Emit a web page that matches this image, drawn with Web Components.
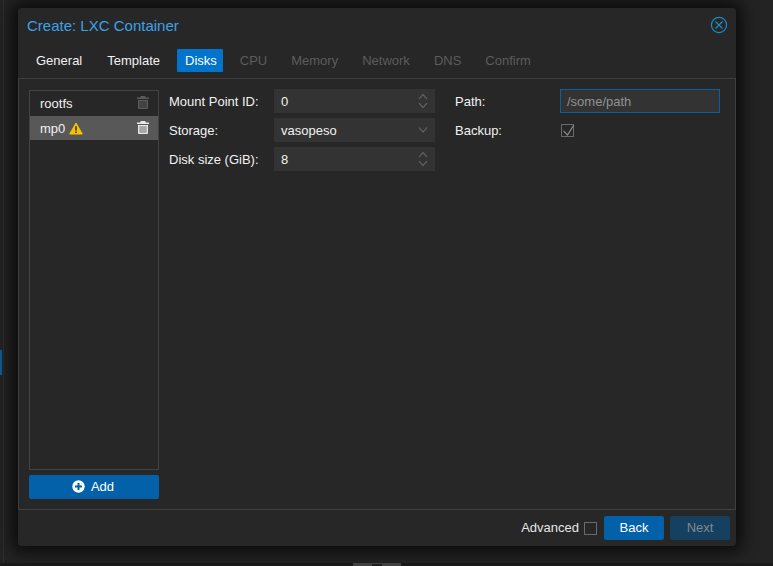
<!DOCTYPE html>
<html>
<head>
<meta charset="utf-8">
<title>Create: LXC Container</title>
<style>
  html, body { margin: 0; height: 100%; }
  body {
    width: 773px;
    height: 566px;
    overflow: hidden;
    background: #1f1f1f;
    font-family: "Liberation Sans", Arial, sans-serif;
  }
</style>
</head>
<body>
<lxc-backdrop>
  <lxc-window heading="Create: LXC Container">
    <lxc-tabs slot="tabs"></lxc-tabs>
    <disk-list slot="side"></disk-list>
    <disk-form slot="main"></disk-form>
    <wizard-footer slot="footer"></wizard-footer>
  </lxc-window>
</lxc-backdrop>
<script>
"use strict";
function makeTemplate(html) {
    const template = document.createElement("template");
    template.innerHTML = html;
    return template;
}
class BaseElement extends HTMLElement {
    constructor(template) {
        super();
        this.attachShadow({ mode: "open" });
        this.shadowRoot.appendChild(template.content.cloneNode(true));
    }
}

const backdropTemplate = makeTemplate(`
  <style>
    :host { display: block; position: relative; width: 773px; height: 566px; box-sizing: border-box;
      padding: 8px 37px 20px 18px; background: #232323; overflow: hidden; }
    .rail { position: absolute; left: 3px; top: 0; bottom: 0; width: 1px; background: #2f2f2f; }
    .marker { position: absolute; left: 0; top: 350px; width: 2px; height: 25px; background: #0f5f94; }
    .strip { position: absolute; left: 0; right: 0; bottom: 0; height: 3px; background: #1a1a1a; }
    .peek { position: absolute; left: 353px; top: 563px; width: 48px; height: 3px; background: #444; }
    .peek::after { content: ""; position: absolute; left: 19px; top: 1px; width: 10px; height: 2px; background: #222; }
    ::slotted(*) { position: relative; z-index: 1; }
  </style>
  <div class="rail"></div><div class="marker"></div><div class="strip"></div><div class="peek"></div>
  <slot></slot>`);
class LxcBackdrop extends BaseElement {
    constructor() { super(backdropTemplate); }
}
customElements.define("lxc-backdrop", LxcBackdrop);

const windowTemplate = makeTemplate(`
  <style>
    :host { display: flex; flex-direction: column; width: 718px; height: 538px; box-sizing: border-box;
      background: #272727; border-radius: 4px; color: #f2f2f2; font-size: 13px;
      box-shadow: 0 0 16px 6px rgba(0,0,0,.7); }
    header { display: flex; align-items: center; justify-content: space-between; height: 36px; box-sizing: border-box;
      padding: 0 8px 2px 9px; }
    h1 { margin: 0; font-size: 15px; font-weight: 400; color: #3ea2e8; }
    svg { display: block; }
    .tabs { height: 34px; }
    .body { flex: 1; display: flex; border: 1px solid #3f3f3f; border-bottom-color: #414141; min-height: 0; }
    .side { width: 130px; padding: 11px 0 10px 10px; display: flex; flex-direction: column; }
    .main { flex: 1; min-width: 0; }
    footer { height: 36px; }
  </style>
  <header>
    <h1></h1>
    <svg width="18" height="18" viewBox="0 0 18 18" fill="none" stroke="#1c8cc4" stroke-width="1.2">
      <circle cx="9" cy="9" r="7.6"/><path d="M5.500 5.500 12.500 12.500M12.500 5.500 5.500 12.500"/>
    </svg>
  </header>
  <div class="tabs"><slot name="tabs"></slot></div>
  <div class="body">
    <div class="side"><slot name="side"></slot></div>
    <div class="main"><slot name="main"></slot></div>
  </div>
  <footer><slot name="footer"></slot></footer>`);
class LxcWindow extends BaseElement {
    constructor() {
        super(windowTemplate);
        this.shadowRoot.querySelector("h1").textContent = this.getAttribute("heading");
    }
}
customElements.define("lxc-window", LxcWindow);

const tabsTemplate = makeTemplate(`
  <style>
    :host { display: flex; padding: 5px 0 0 7px; gap: 2px; font-size: 13px; }
    span { height: 23px; line-height: 23px; padding: 0 11px; box-sizing: border-box; border-radius: 1px; color: #f2f2f2; }
    span.first { padding-right: 12px; }
    span.on { background: #0274cc; padding: 0 6px 0 8px; margin: 0 0 0 4px; color: #fff; }
    span.off { color: #5c5c5c; }
    span.after { margin-left: 4px; }
  </style>
  <span class="first">General</span><span>Template</span><span class="on">Disks</span>
  <span class="off after">CPU</span><span class="off">Memory</span><span class="off">Network</span><span class="off">DNS</span><span class="off">Confirm</span>`);
class LxcTabs extends BaseElement {
    constructor() { super(tabsTemplate); }
}
customElements.define("lxc-tabs", LxcTabs);

const TRASH = `<svg width="12" height="13" viewBox="0 0 12 13"><path fill="currentColor" fill-rule="evenodd" d="M4 0h4l1 1.500h3v1.500H0V1.500h3zM1 4h10v8a1 1 0 0 1-1 1H2a1 1 0 0 1-1-1zM2.500 5.200v6.600h7V5.200z"/><rect x="2.500" y="5.200" width="7" height="6.600" fill="currentColor" opacity=".55"/></svg>`;
const listTemplate = makeTemplate(`
  <style>
    :host { display: flex; flex-direction: column; height: 100%; }
    .list { flex: 1; border: 1px solid #434343; font-size: 13px; box-sizing: border-box; }
    .row { display: flex; align-items: center; height: 25px; padding: 0 9px 0 10px; color: #f2f2f2; gap: 3.6px; }
    .row.sel { background: #585858; height: 24px; padding-top: 1px; box-sizing: border-box; }
    .trash { margin-left: auto; color: #5a5a5a; margin-top: -2px; }
    .sel .trash { color: #e8e8e8; }
    .row svg { display: block; }
    button { all: unset; box-sizing: border-box; margin-top: 5px; height: 24px; background: #0261a8; border-radius: 2px;
      padding: 0 2px 1px 0; display: flex; align-items: center; justify-content: center; gap: 6px; color: #fff;
      font: 13px "Liberation Sans", Arial, sans-serif; }
  </style>
  <div class="list">
    <div class="row">rootfs<span class="trash">${TRASH}</span></div>
    <div class="row sel">mp0
      <svg width="14" height="13" viewBox="0 0 14 13"><path fill="#f5c400" stroke="#f5c400" stroke-width="1" stroke-linejoin="round" d="M7 1 13.300 12H0.700z"/><path fill="#3a3000" d="M6.200 4.200h1.600v4.300H6.200zM6.200 9.500h1.600v1.500H6.200z"/></svg>
      <span class="trash">${TRASH}</span></div>
  </div>
  <button>
    <svg width="13" height="13" viewBox="0 0 13 13"><circle cx="6.500" cy="6.500" r="6.200" fill="#fff"/><path fill="#0261a8" d="M5.500 3h2v2.500H10v2H7.500V10h-2V7.500H3v-2h2.500z"/></svg>
    Add
  </button>`);
class DiskList extends BaseElement {
    constructor() { super(listTemplate); }
}
customElements.define("disk-list", DiskList);

const SPIN = `<svg width="12" height="18" viewBox="0 0 12 18" fill="none" stroke="#5e5e5e" stroke-width="1.200"><path d="M2 7 6 2.500 10 7M2 11 6 15.500 10 11"/></svg>`;
const DROP = `<svg width="12" height="18" viewBox="0 0 12 18" fill="none" stroke="#5e5e5e" stroke-width="1.200"><path d="M2 6.500 6 11 10 6.500"/></svg>`;
const formTemplate = makeTemplate(`
  <style>
    :host { display: grid; grid-template-columns: 105px 161px 125px 160px; column-gap: 0; grid-auto-rows: 24px;
      row-gap: 5px; padding: 10px 0 0 10px; font-size: 13px; align-items: center; }
    .f { height: 24px; background: #333; box-sizing: border-box; display: flex; align-items: center;
      padding: 0 7px; color: #f2f2f2; justify-content: space-between; }
    .f svg { display: block; margin-right: -1px; }
    .l2 { padding-left: 20px; }
    .path { border: 1px solid #0a5f9e; padding: 0 6px; color: #929292; }
    .check { width: 13px; height: 13px; border: 1px solid #6a6a6a; box-sizing: border-box; margin-left: 1px; position: relative; }
    .check svg { position: absolute; left: -1px; top: -1px; overflow: visible; }
  </style>
  <label>Mount Point ID:</label><div class="f">0${SPIN}</div>
  <label class="l2">Path:</label><div class="f path">/some/path</div>
  <label>Storage:</label><div class="f">vasopeso${DROP}</div>
  <label class="l2">Backup:</label>
  <div class="check"><svg width="14" height="14" viewBox="0 0 14 14" fill="none" stroke="#8a8a8a" stroke-width="1.200"><path d="M2.500 6.800 6.500 11 12.800 1"/></svg></div>
  <label>Disk size (GiB):</label><div class="f">8${SPIN}</div>`);
class DiskForm extends BaseElement {
    constructor() { super(formTemplate); }
}
customElements.define("disk-form", DiskForm);

const footerTemplate = makeTemplate(`
  <style>
    :host { display: flex; align-items: center; justify-content: flex-end; height: 36px; padding: 0 6px 1px 0; box-sizing: border-box;
      font-size: 13px; color: #e6e6e6; }
    .box { width: 13px; height: 13px; border: 1px solid #6a6a6a; box-sizing: border-box; margin: 1px 7px 0 5px; }
    .btn { width: 60px; height: 24px; line-height: 24px; text-align: center; border-radius: 2px; background: #0261a8; color: #fff; }
    .btn.off { margin-left: 6px; background: #15405f; color: #7c8a94; }
  </style>
  <span>Advanced</span><span class="box"></span>
  <span class="btn">Back</span><span class="btn off">Next</span>`);
class WizardFooter extends BaseElement {
    constructor() { super(footerTemplate); }
}
customElements.define("wizard-footer", WizardFooter);
</script>
</body>
</html>
